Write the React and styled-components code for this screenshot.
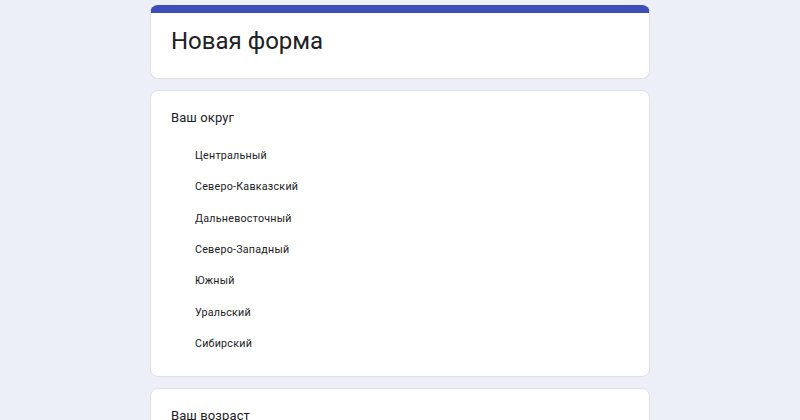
import React from 'react'
import styled, { createGlobalStyle } from 'styled-components'

const GlobalStyle = createGlobalStyle`
  html, body {
    margin: 0;
    padding: 0;
    background: #eceef8;
    font-family: Roboto, "Noto Sans", Arial, sans-serif;
    color: #202124;
  }
`

const Page = styled.div`
  display: flex;
  flex-direction: column;
  align-items: center;
  gap: 11px;
  padding-top: 5px;
`

const Card = styled.div`
  width: 500px;
  box-sizing: border-box;
  background: #fff;
  border: 1px solid #dfe1e8;
  border-radius: 8px;
  padding: ${({ $pad }) => $pad || '20px'};
`

const HeaderCard = styled(Card)`
  border-top: 8px solid #3f4db8;
  padding: 12px 20px 21px;
`

const Title = styled.h1`
  margin: 0;
  font-size: 24px;
  font-weight: 400;
  line-height: 32px;
  color: #202124;
`

const Question = styled.div`
  font-size: 13px;
  line-height: 16px;
  letter-spacing: 0.1px;
  color: #202124;
  margin-bottom: 14px;
`

const Options = styled.ul`
  list-style: none;
  margin: 0;
  padding: 0 0 0 24px;
`

const Option = styled.li`
  font-size: 10.7px;
  line-height: 31.33px;
  letter-spacing: 0.25px;
  color: #202124;
`

const regions = [
  'Центральный',
  'Северо-Кавказский',
  'Дальневосточный',
  'Северо-Западный',
  'Южный',
  'Уральский',
  'Сибирский',
]

export default function App() {
  return (
    <>
      <GlobalStyle />
      <Page>
        <HeaderCard>
          <Title>Новая форма</Title>
        </HeaderCard>
        <Card $pad="19px 20px 17px">
          <Question>Ваш округ</Question>
          <Options>
            {regions.map((r) => (
              <Option key={r}>{r}</Option>
            ))}
          </Options>
        </Card>
        <Card $pad="19px 20px 40px">
          <Question>Ваш возраст</Question>
        </Card>
      </Page>
    </>
  )
}
